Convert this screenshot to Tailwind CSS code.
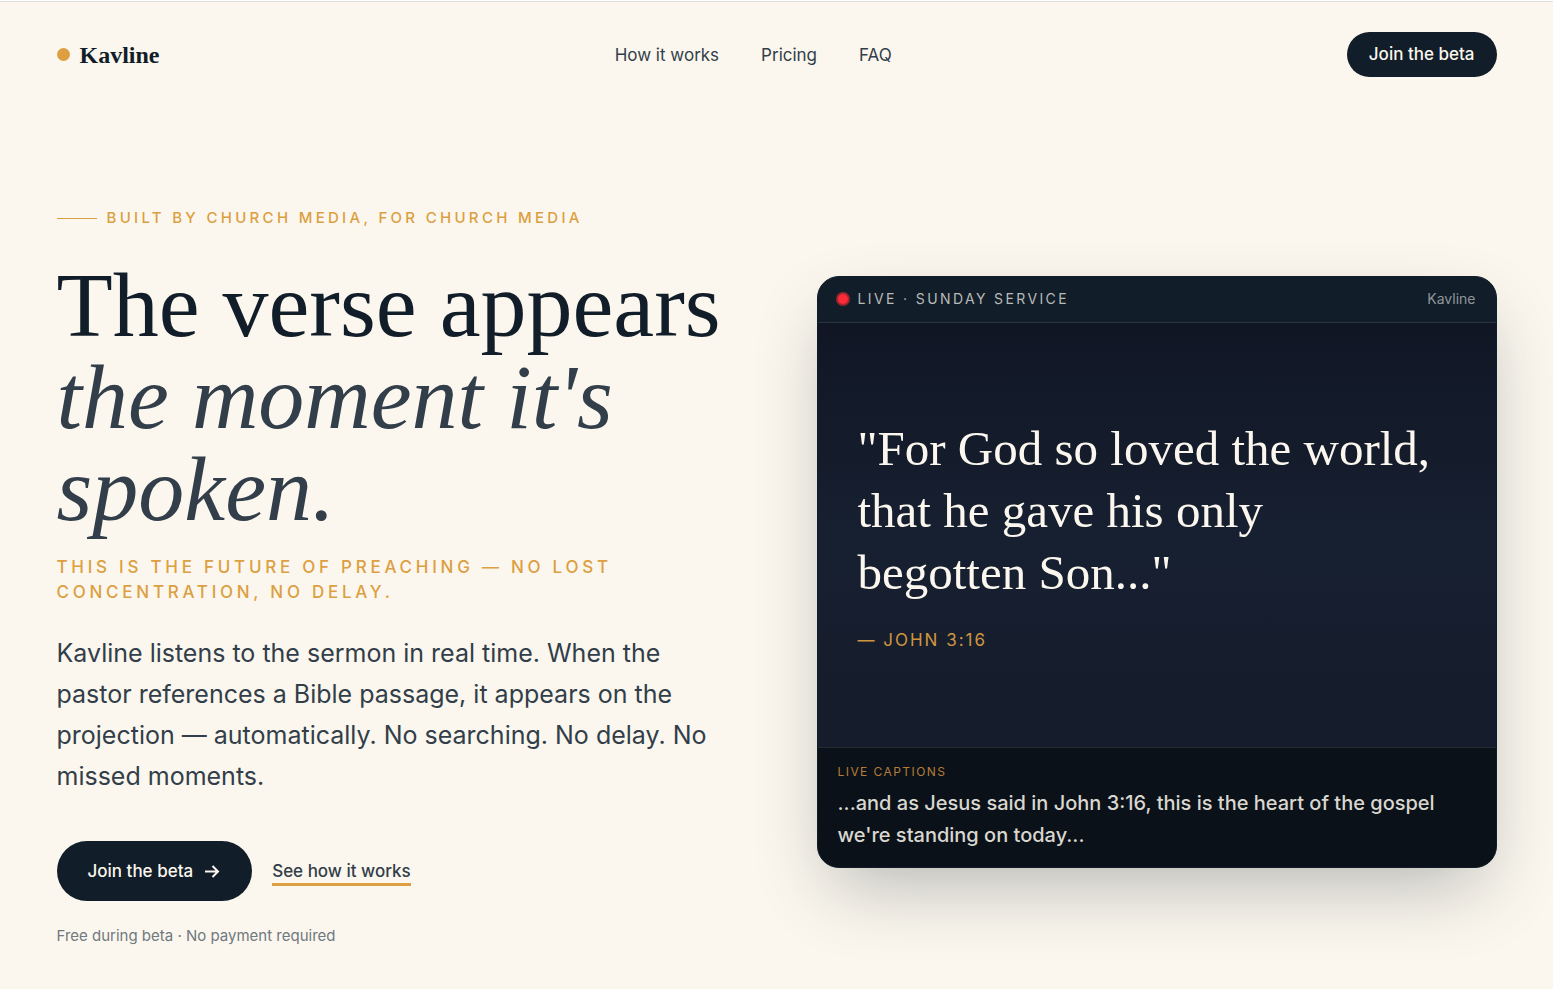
<!DOCTYPE html>
<html lang="en">
<head>
    <meta charset="UTF-8">
    <meta name="viewport" content="width=device-width, initial-scale=1.0">
    <title>Kavline</title>
    <script src="https://cdn.jsdelivr.net/npm/@tailwindcss/browser@4"></script>
</head>
<body class="bg-[#fbf7ee] min-h-screen font-['Inter','Liberation_Sans',sans-serif] text-[#111d28]">
    <div class="h-0.5 bg-white border-b border-[#dfe0de]"></div>

    <header class="px-14 py-[30px]">
        <div class="max-w-[1440px] mx-auto flex items-center justify-between">
            <a href="#" class="flex items-center gap-2.5">
                <span class="size-[13px] rounded-full bg-[#dc9f41]"></span>
                <span class="font-['Liberation_Serif',serif] font-bold text-2xl leading-8">Kavline</span>
            </a>
            <nav class="flex items-center gap-[42px] text-[17px] leading-6 text-[#323e49]">
                <a href="#how">How it works</a>
                <a href="#pricing">Pricing</a>
                <a href="#faq">FAQ</a>
            </nav>
            <button type="button" class="rounded-full bg-[#111d28] text-[#fbf7ee] px-[22px] h-[45px] text-[17px] leading-[27px] font-medium">Join the beta</button>
        </div>
    </header>

    <main class="px-14 pt-[90px] pb-10">
        <div class="max-w-[1440px] mx-auto grid grid-cols-1 lg:grid-cols-2 gap-20 items-center">
            <section class="pt-2">
                <p class="flex items-center gap-2.5 text-[15px] leading-[26px] font-medium tracking-[0.22em] uppercase text-[#dc9f41]">
                    <span class="w-10 border-t border-[#dc9f41]"></span>
                    Built by church media, for church media
                </p>
                <h1 class="mt-7 font-['Liberation_Serif',serif] text-[92px] leading-[92px]">
                    The verse appears
                    <em class="text-[#323e49]">the moment it's spoken.</em>
                </h1>
                <p class="mt-5 text-[17px] leading-[25px] font-medium tracking-[0.22em] uppercase text-[#dc9f41]">
                    This is the future of preaching — no lost concentration, no delay.
                </p>
                <p class="mt-7 text-[25px] leading-[41px] text-[#323e49]">
                    Kavline listens to the sermon in real time. When the pastor references a Bible passage, it appears on the projection — automatically. No searching. No delay. No missed moments.
                </p>
                <div class="mt-11 flex items-center gap-5">
                    <button type="button" class="flex items-center gap-2.5 rounded-full bg-[#111d28] text-[#fbf7ee] px-[31px] h-[60px] text-[17px] leading-[27px] font-medium">
                        Join the beta
                        <svg class="size-[18px]" viewBox="0 0 18 18" fill="none" stroke="currentColor" stroke-width="2" aria-hidden="true">
                            <path d="M2 9.5h13M9.5 4l5.5 5.5-5.5 5.5"/>
                        </svg>
                    </button>
                    <a href="#how" class="pt-[3px] text-[17px] leading-6 font-medium text-[#323e49] border-b-3 border-[#dc9f41]">See how it works</a>
                </div>
                <p class="mt-[25px] text-[15px] leading-5 text-[#707880]">Free during beta · No payment required</p>
            </section>

            <!-- Live projection preview -->
            <section id="how" class="rounded-[22px] overflow-hidden border border-[#111d28] bg-[#111d28] shadow-[0_30px_75px_-15px_rgba(17,29,40,0.3)]">
                <div class="flex items-center justify-between h-[46px] px-5 border-b border-white/10">
                    <div class="flex items-center gap-2.5 text-sm tracking-[0.17em] uppercase text-[#b8bab9]">
                        <span class="size-2.5 rounded-full bg-[#fb2c36] ring-2 ring-[#fb2c36]/60"></span>
                        Live · Sunday Service
                    </div>
                    <span class="text-sm text-[#90959a]">Kavline</span>
                </div>
                <div class="h-[424px] px-10 flex flex-col justify-center bg-linear-to-b from-[#101624] via-[#172031] to-[#151c2b]">
                    <blockquote class="max-w-[580px] font-['Liberation_Serif',serif] text-[49px] leading-[62px] text-[#fbf7ee]">
                        "For God so loved the world, that he gave his only begotten Son..."
                    </blockquote>
                    <p class="mt-6 text-[17px] leading-6 tracking-[2px] uppercase text-[#cf963f]">— John 3:16</p>
                </div>
                <div class="border-t border-white/10 bg-[#0a1118] px-5 py-4">
                    <p class="text-xs leading-4 tracking-[0.12em] uppercase text-[#b67c38]">Live captions</p>
                    <p class="mt-[7px] text-[20px] leading-8 font-medium text-[#d9d7d0]">...and as Jesus said in John 3:16, this is the heart of the gospel we're standing on today...</p>
                </div>
            </section>
        </div>
    </main>
</body>
</html>
